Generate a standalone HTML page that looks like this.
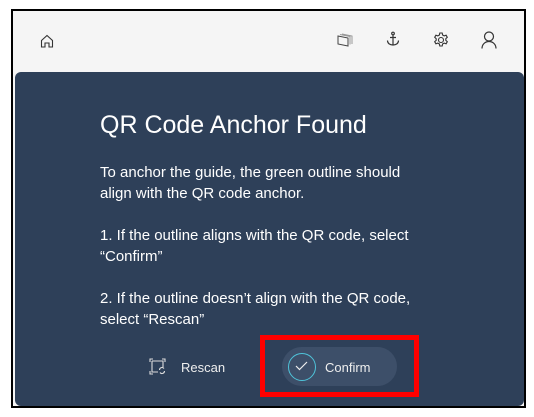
<!DOCTYPE html>
<html><head><style>
html,body{margin:0;padding:0;width:534px;height:417px;background:#fff;overflow:hidden;font-family:"Liberation Sans",sans-serif}
.frame{position:absolute;left:11px;top:9px;width:511px;height:395px;border:2px solid #000;background:#f5f5f5}
.panel{position:absolute;left:2px;top:61px;width:509px;height:334px;background:#2e4059;border-radius:6px}
.t{position:absolute;color:#fff}
svg{position:absolute}
</style></head><body>
<div class="frame">
<svg style="left:27px;top:23px" width="14" height="14" viewBox="0 0 14 14" fill="none" stroke="#333" stroke-width="1.1"><path d="M1.5 6.5L7 1.5l5.5 5V13H9V9H5v4H1.5z"/></svg>
<svg style="left:324px;top:22px" width="16" height="14" viewBox="0 0 16 14" fill="none" stroke="#444" stroke-width="1"><path d="M1 3l10 2v8L1 11z"/><path d="M3 1.5l10 2v8M5 1l10 2v8" stroke="#999"/></svg>
<svg style="left:373px;top:20px" width="14" height="16" viewBox="0 0 14 16" fill="none" stroke="#333" stroke-width="1.2"><circle cx="7" cy="2.5" r="1.3"/><path d="M7 4v10M4 6.5h6M1.5 9.5c0 3 2.5 4.5 5.5 4.5s5.5-1.5 5.5-4.5"/></svg>
<svg style="left:420px;top:21px" width="16" height="16" viewBox="0 0 16 16" fill="none" stroke="#333" stroke-width="1.1"><circle cx="8" cy="8" r="2.5"/><path d="M6.8 1h2.4l.4 2 1.6.9 1.9-.7 1.2 2.1-1.5 1.4v1.6l1.5 1.4-1.2 2.1-1.9-.7-1.6.9-.4 2H6.8l-.4-2-1.6-.9-1.9.7-1.2-2.1 1.5-1.4V6.7L1.7 5.3l1.2-2.1 1.9.7 1.6-.9z"/></svg>
<svg style="left:468px;top:20px" width="16" height="18" viewBox="0 0 16 18" fill="none" stroke="#333" stroke-width="1.2"><circle cx="8" cy="5.5" r="4.5"/><path d="M1 17.5c0-4 3-7 7-7s7 3 7 7"/></svg>
<div class="panel"></div>
</div>
<div class="t" style="left:100px;top:111px;font-size:25px">QR Code Anchor Found</div>
<div class="t" style="left:100px;top:162px;font-size:15px;line-height:21px;width:330px">To anchor the guide, the green outline should align with the QR code anchor.<br><br>1. If the outline aligns with the QR code, select “Confirm”<br><br>2. If the outline doesn’t align with the QR code, select “Rescan”</div>
<svg style="left:149px;top:358px" width="17" height="17" viewBox="0 0 17 17" fill="none" stroke="#ddd" stroke-width="1.1"><path d="M1 4V1h3M13 1h3v3M1 13v3h3M3 3h11v6M3 3v11h6"/><path d="M10.5 12a2.5 2.5 0 0 1 4.5-1.5M15.5 13a2.5 2.5 0 0 1-4.5 1.5"/></svg>
<div class="t" style="left:181px;top:360px;font-size:13px;color:#eee">Rescan</div>
<div style="position:absolute;left:260px;top:335px;width:149px;height:52px;border:5px solid #f00"></div>
<div style="position:absolute;left:282px;top:347px;width:115px;height:39px;border-radius:20px;background:#3d4f69"></div>
<div style="position:absolute;left:288px;top:353px;width:26px;height:26px;border-radius:50%;border:1.5px solid #4fc3d9"></div>
<svg style="left:294px;top:360px" width="15" height="12" viewBox="0 0 15 12" fill="none" stroke="#eee" stroke-width="1.2"><path d="M2 6l3.5 3.5L13 2"/></svg>
<div class="t" style="left:325px;top:360px;font-size:13px;color:#eee">Confirm</div>
</body></html>
